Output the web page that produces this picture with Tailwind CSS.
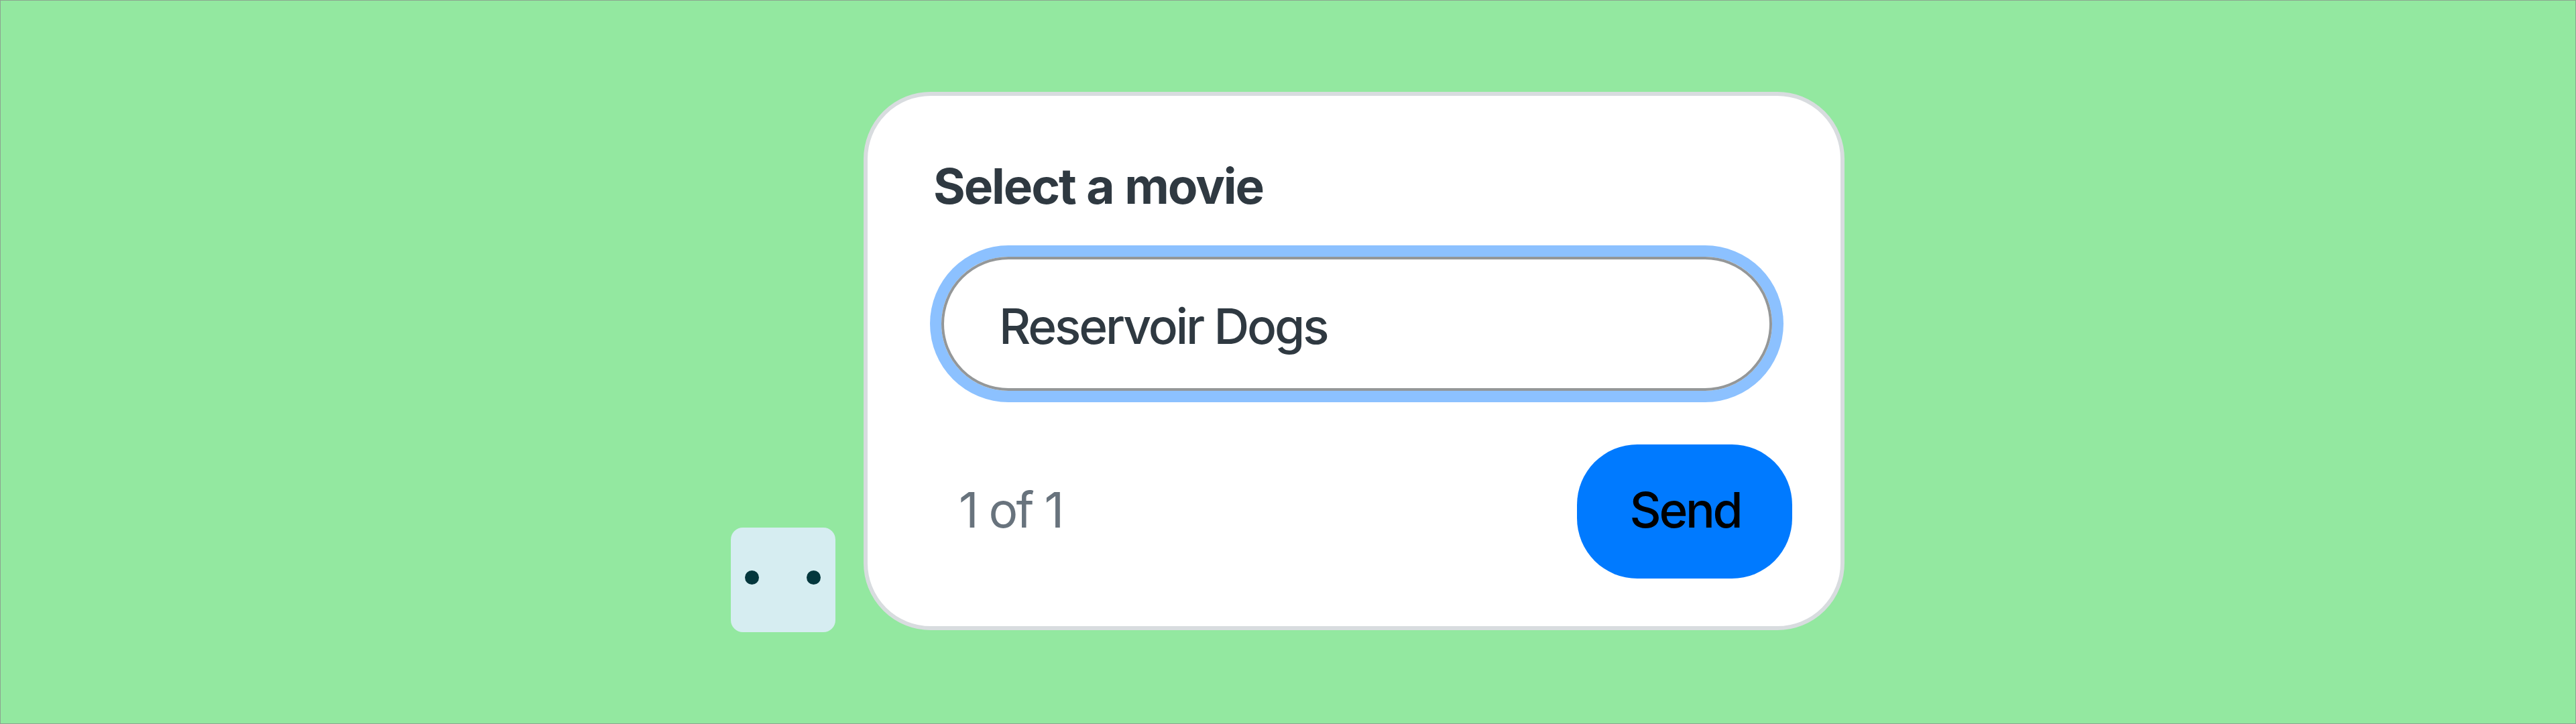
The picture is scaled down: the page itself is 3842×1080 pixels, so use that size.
<!DOCTYPE html>
<html lang="en">
<head>
<meta charset="utf-8">
<title>Select a movie</title>
<script src="https://cdn.jsdelivr.net/npm/@tailwindcss/browser@4"></script>
</head>
<body class="h-[1080px] w-[3842px] overflow-hidden font-['Inter',sans-serif]">
<main class="flex h-full w-full items-start border border-[#8ba590] bg-[#93e8a0] pl-[1089px] pt-[136px]">
  <div class="mt-[650px] flex h-[156px] w-[156px] shrink-0 justify-between rounded-[18px] bg-[#d6edf1] pl-[21px] pr-[22px] pt-[64px]">
    <span class="h-[21px] w-[21px] rounded-full bg-[#04373d]"></span>
    <span class="h-[21px] w-[21px] rounded-full bg-[#04373d]"></span>
  </div>
  <form class="ml-[42px] flex h-[803px] w-[1463px] shrink-0 flex-col rounded-[100px] border-6 border-[#d8dcdf] bg-white pl-[98px] pr-[72px] pt-[89px]">
    <label class="whitespace-nowrap pt-px text-[73px] leading-[90px] font-bold tracking-[-2.1px] [word-spacing:1.5px] text-[#2f3941]">Select a movie</label>
    <div class="ml-[12px] mt-[60px] flex h-[200px] w-[1239px] shrink-0 items-center rounded-[100px] border-4 border-[#949798] pl-[82px] pt-[7px] text-[73px] leading-[90px] tracking-[-3.1px] text-[#2f3941] ring-[17px] ring-[#8cc1ff]"><span class="whitespace-nowrap font-medium">Reservoir Dogs</span></div>
    <div class="mt-[80px] flex items-center justify-between pl-[38px]">
      <span class="pb-[4px] whitespace-nowrap text-[73px] leading-[90px] tracking-[-2.8px] text-[#68737d]">1 of 1</span>
      <button type="button" class="flex h-[200px] w-[321px] items-center justify-center rounded-[90px] bg-[#007aff] pb-[4px] pl-[2px] text-[73px] leading-[90px] font-medium tracking-[-3.3px] text-black">Send</button>
    </div>
  </form>
</main>
</body>
</html>
